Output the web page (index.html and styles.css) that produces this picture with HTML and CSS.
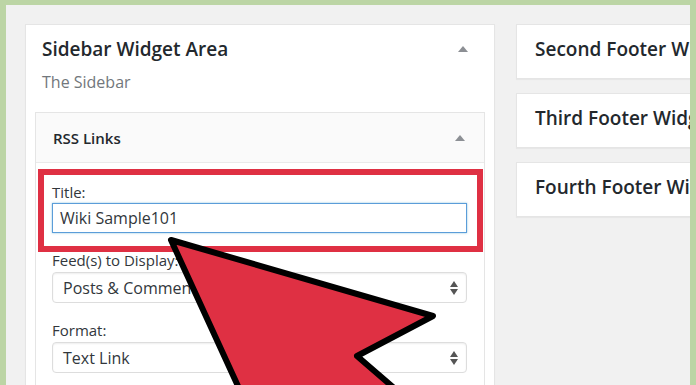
FILE: index.html
```html
<!DOCTYPE html>
<html lang="en">
<head>
<meta charset="utf-8">
<title>Widgets</title>
<link rel="stylesheet" href="styles.css">
</head>
<body>
<div class="frame">
  <div class="screen">
    <div class="col-left">
      <div class="sidebar">
        <div class="sidebar-head">
          <h2 class="sidebar-title">Sidebar Widget Area</h2>
          <span class="toggle"></span>
        </div>
        <p class="desc">The Sidebar</p>
        <div class="widget">
          <div class="widget-top">
            <h3 class="widget-title">RSS Links</h3>
            <span class="toggle"></span>
          </div>
          <div class="widget-inside">
            <label class="field-label label-title">Title:</label>
            <div class="input">Wiki Sample101</div>
            <label class="field-label label-gap">Feed(s) to Display:</label>
            <div class="select"><span>Posts &amp; Comments</span><span class="updown"></span></div>
            <label class="field-label label-gap">Format:</label>
            <div class="select"><span>Text Link</span><span class="updown"></span></div>
          </div>
        </div>
      </div>
    </div>
    <div class="col-right">
      <div class="box"><h2 class="sidebar-title">Second Footer Widget Area</h2></div>
      <div class="box"><h2 class="sidebar-title">Third Footer Widget Area</h2></div>
      <div class="box"><h2 class="sidebar-title">Fourth Footer Widget Area</h2></div>
    </div>
  </div>
  <div class="highlight"></div>
  <svg class="arrow" width="696" height="385" viewBox="0 0 696 385" aria-hidden="true">
    <polygon points="171,240 433,316 357,356 460,445 265,445" fill="#df3043" stroke="#000" stroke-width="6" stroke-linejoin="round"/>
  </svg>
</div>
</body>
</html>
```

FILE: styles.css
```css
* { box-sizing: border-box; }
html, body { margin: 0; padding: 0; }
body {
  width: 696px;
  height: 385px;
  overflow: hidden;
  font-family: "Open Sans", "Noto Sans", sans-serif;
  color: #23282d;
}
.frame {
  position: relative;
  width: 696px;
  height: 385px;
  background: #bcd5a5;
  padding: 5px 6px 0 6px;
}
.screen {
  height: 100%;
  background: #f1f1f1;
  display: flex;
  gap: 21px;
  padding: 19px 0 0 19px;
  overflow: hidden;
}
.col-left { flex: 0 0 470px; }
.sidebar {
  height: 100%;
  background: #fff;
  border: 1px solid #e5e5e5;
  border-bottom: 0;
  box-shadow: 0 1px 1px rgba(0,0,0,.04);
  padding: 0 9px 0 9px;
}
.sidebar-head {
  display: flex;
  justify-content: space-between;
  align-items: center;
  padding: 12px 17px 0 7px;
}
.sidebar-title {
  margin: 0;
  font-size: 19px;
  line-height: 24px;
  font-weight: 600;
  color: #23282d;
  white-space: nowrap;
}
.toggle {
  width: 0; height: 0;
  border-left: 5px solid transparent;
  border-right: 5px solid transparent;
  border-bottom: 6px solid #8c8f94;
}
.desc {
  margin: 11px 0 0 7px;
  font-size: 16px;
  line-height: 20px;
  color: #72777c;
}
.widget {
  margin-top: 20px;
  border: 1px solid #e5e5e5;
  border-bottom: 0;
  background: #fff;
  height: 300px;
}
.widget-top {
  display: flex;
  justify-content: space-between;
  align-items: center;
  background: #fafafa;
  border-bottom: 1px solid #eaeaea;
  padding: 15px 19px 14px 17px;
}
.widget-title {
  margin: 0;
  font-size: 15px;
  line-height: 20px;
  font-weight: 600;
  color: #23282d;
}
.widget-inside {
  padding: 19px 17px 0 16px;
}
.field-label {
  display: block;
  font-size: 15px;
  line-height: 20px;
  color: #32373c;
}
.label-gap { margin-top: 17px; }
.input {
  margin-top: 1px;
  height: 30px;
  border: 1px solid #5b9dd9;
  box-shadow: 0 0 2px rgba(30,140,190,.5);
  padding: 0 7px;
  font-size: 16px;
  line-height: 28px;
  color: #32373c;
}
.select {
  margin-top: 2px;
  height: 31px;
  border: 1px solid #ddd;
  border-radius: 4px;
  box-shadow: inset 0 1px 2px rgba(0,0,0,.07);
  display: flex;
  justify-content: space-between;
  align-items: center;
  padding: 0 8px 0 10px;
  font-size: 16px;
  color: #32373c;
}
.updown {
  position: relative;
  width: 8px;
  height: 14px;
}
.updown::before, .updown::after {
  content: "";
  position: absolute;
  left: 0;
  border-left: 4px solid transparent;
  border-right: 4px solid transparent;
}
.updown::before { top: 0; border-bottom: 6px solid #555; }
.updown::after { bottom: 0; border-top: 6px solid #555; }
.col-right {
  flex: 1 0 200px;
  display: flex;
  flex-direction: column;
  gap: 14px;
}
.box {
  height: 55px;
  background: #fff;
  border: 1px solid #e5e5e5;
  border-right: 0;
  box-shadow: 0 1px 1px rgba(0,0,0,.04);
  padding: 12px 0 0 18px;
  overflow: hidden;
}
.highlight {
  position: absolute;
  left: 38px;
  top: 169px;
  width: 445px;
  height: 83px;
  border: 6px solid #df3043;
}
.arrow {
  position: absolute;
  left: 0;
  top: 0;
  overflow: hidden;
}
```
